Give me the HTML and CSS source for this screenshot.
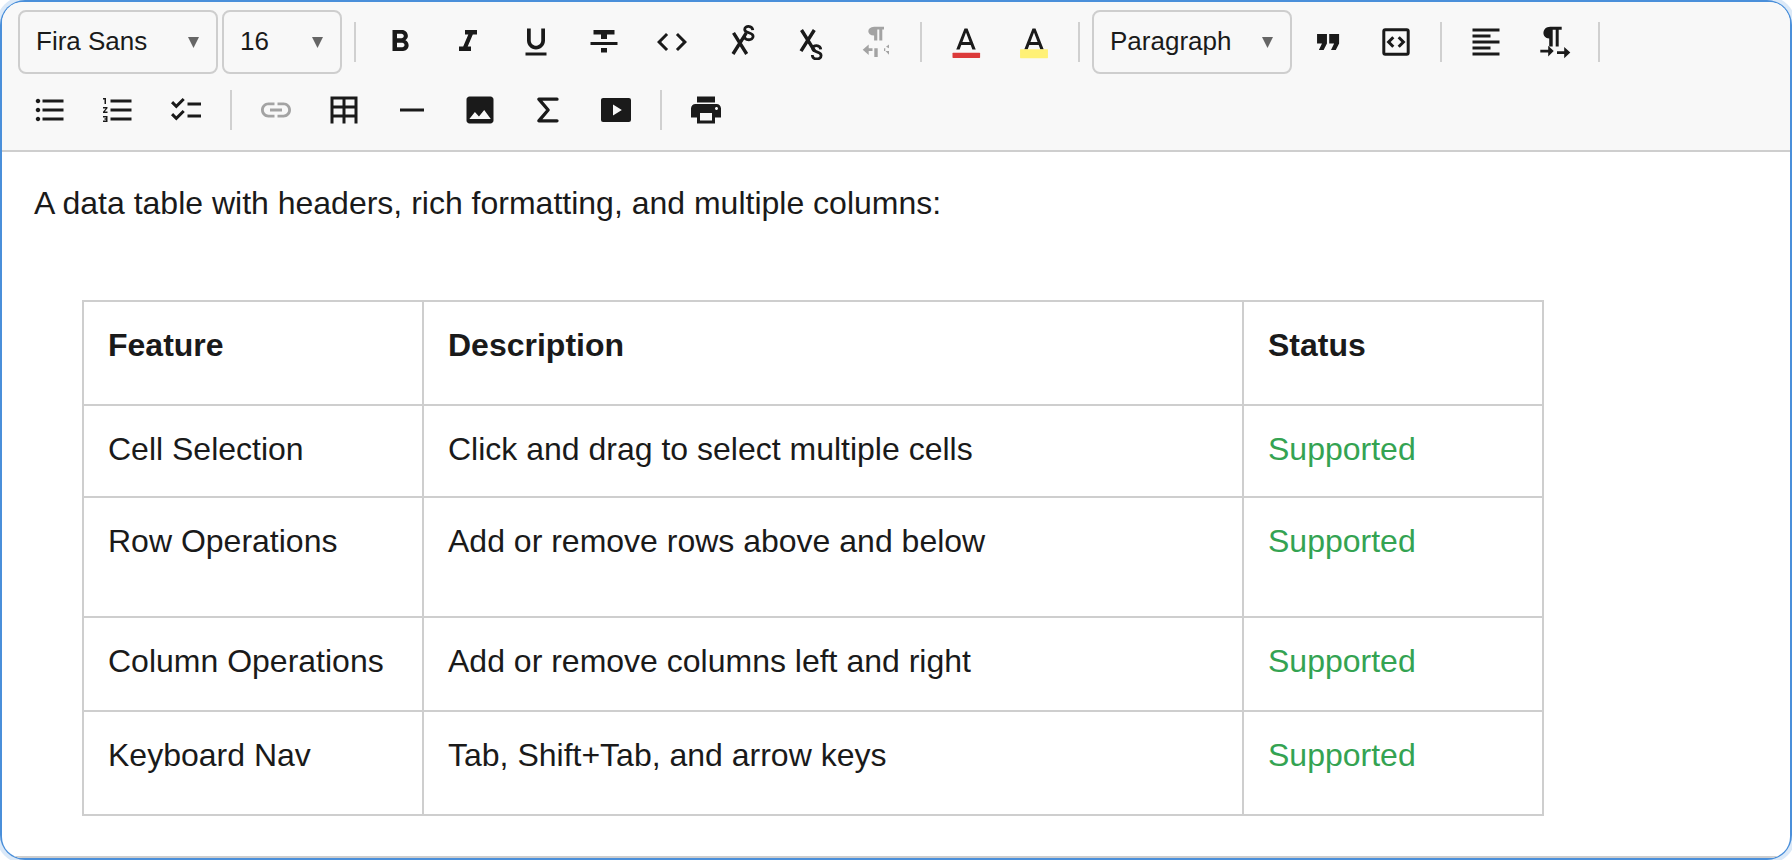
FILE: index.html
```
<!DOCTYPE html>
<html lang="en">

<head>
  <meta charset="UTF-8">
  <meta name="viewport" content="width=device-width, initial-scale=1.0">
  <title>Editor</title>
  <link rel="stylesheet" href="styles.css">
</head>

<body>
  <div class="editor">
    <div class="inner">
      <div class="toolbar">
        <div class="tools">
          <div class="select"><span>Fira Sans</span><svg class="arrow" viewBox="0 0 11 11"><path d="M0 0h11L5.5 11z"/></svg></div>
          <div class="select small"><span>16</span><svg class="arrow" viewBox="0 0 11 11"><path d="M0 0h11L5.5 11z"/></svg></div>
          <span class="sep"></span>
          <button class="btn" title="Bold"><svg viewBox="0 0 24 24"><path d="M15.6 10.79c.97-.67 1.65-1.77 1.65-2.79 0-2.26-1.75-4-4-4H7v14h7.04c2.09 0 3.71-1.7 3.71-3.79 0-1.52-.86-2.82-2.15-3.42zM10 6.5h3c.83 0 1.5.67 1.5 1.5s-.67 1.5-1.5 1.5h-3v-3zm3.5 9H10v-3h3.5c.83 0 1.5.67 1.5 1.5s-.67 1.5-1.5 1.5z"/></svg></button>
          <button class="btn" title="Italic"><svg viewBox="0 0 24 24"><path d="M10 4v3h2.21l-3.42 8H6v3h8v-3h-2.21l3.42-8H18V4z"/></svg></button>
          <button class="btn" title="Underline"><svg viewBox="0 0 24 24"><path d="M12 17c3.31 0 6-2.69 6-6V3h-2.5v8c0 1.93-1.57 3.5-3.5 3.5S8.5 12.93 8.5 11V3H6v8c0 3.31 2.69 6 6 6zm-7 2v2h14v-2H5z"/></svg></button>
          <button class="btn" title="Strikethrough"><svg viewBox="0 0 24 24"><path d="M10 19h4v-3h-4v3zM5 4v3h5v3h4V7h5V4H5zM3 14h18v-2H3v2z"/></svg></button>
          <button class="btn" title="Code"><svg viewBox="0 0 24 24"><path d="M9.4 16.6L4.8 12l4.6-4.6L8 6l-6 6 6 6 1.4-1.4zm5.2 0l4.6-4.6-4.6-4.6L16 6l6 6-6 6-1.4-1.4z"/></svg></button>
          <button class="btn" title="Superscript"><svg viewBox="0 0 36 36"><path class="line bold" d="M11.5 8.800l13.200 21.200M24.300 8.800L11 30"/><path class="line thin" d="M30.800 6.200C30.300 1.200 22.700 1.200 22.700 5.400c0 4.200 8.400 2.500 8.400 6.800 0 4.800-8.600 4.800-8.800-.4"/></svg></button>
          <button class="btn" title="Subscript"><svg viewBox="0 0 36 36"><path class="line bold" d="M11.500 6l13.200 21.200M24.300 6L11 27.200"/><path class="line thin" d="M30.800 25.400c-.5-5-8.100-5-8.100-.8 0 4.200 8.400 2.500 8.400 6.800 0 4.800-8.600 4.800-8.800-.4"/></svg></button>
          <button class="btn off" title="Right to left"><svg viewBox="0 0 36 36"><path d="M26 2.800v2.800h-1.700v11h-3v-11h-2v11h-3.200v-5c-7.700 0-7.700-8.800 0-8.800zM4.700 25.700l6-5.200v3.800h3.800v2.800h-3.800v3.800zM16.300 24.300h3.400V33h-3.400zM31 20.500v3.700l-3-1.400zM31 27v3.700L27.500 27zM26 24.300h1.300V27H26z"/></svg></button>
          <span class="sep"></span>
          <button class="btn" title="Text color"><svg viewBox="0 0 24 24"><path d="M11 3L5.500 17h2.250l1.120-3h6.250l1.120 3h2.250L13 3h-2zm-1.380 9L12 5.670 14.380 12H9.620z"/><rect class="red" x="3" y="19.200" width="18.400" height="3.400" rx=".4"/></svg></button>
          <button class="btn" title="Highlight"><svg viewBox="0 0 24 24"><path d="M11 3L5.500 17h2.250l1.120-3h6.250l1.120 3h2.250L13 3h-2zm-1.380 9L12 5.670 14.380 12H9.620z"/><rect class="yellow" x="2.700" y="16.800" width="18.600" height="6" rx=".4"/></svg></button>
          <span class="sep"></span>
          <div class="select"><span>Paragraph</span><svg class="arrow" viewBox="0 0 11 11"><path d="M0 0h11L5.500 11z"/></svg></div>
          <button class="btn" title="Quote"><svg viewBox="0 0 24 24"><path d="M5.900 17.300h3.200l2.200-4.300V6.700H4.700V13H8zM14 17.300h3.200l2.200-4.300V6.700h-6.600V13h3.300z"/></svg></button>
          <button class="btn" title="Code block"><svg viewBox="0 0 36 36"><rect class="line" x="5.800" y="5.800" width="24.400" height="24.400" rx="1.500"/><path class="line" d="M15.300 13.200L10.600 18l4.700 4.800M20.700 13.200l4.700 4.800-4.700 4.800"/></svg></button>
          <span class="sep"></span>
          <button class="btn" title="Align"><svg viewBox="0 0 24 24"><path d="M15 15H3v2h12v-2zm0-8H3v2h12V7zM3 13h18v-2H3v2zm0 8h18v-2H3v2zM3 3v2h18V3H3z"/></svg></button>
          <button class="btn" title="Left to right"><svg viewBox="0 0 36 36"><path d="M25.700 2.800v3h-3v16.700h-3V5.800h-3v16.700h-3.500v-7.900c-7.800-.3-7.800-11.800 1.100-11.800zM4.300 25.800h7.900v-4.100l5.500 5.400-5.500 5.500v-4.100H4.300zM21 27.200h7.200V23l6.100 5.600-6.100 5.700V30H21z"/></svg></button>
          <span class="sep"></span>
        </div>
        <div class="tools">
          <button class="btn" title="Bullet list"><svg viewBox="0 0 24 24"><path d="M4 10.500c-.83 0-1.500.67-1.500 1.500s.67 1.500 1.500 1.500 1.500-.67 1.500-1.500-.67-1.500-1.500-1.500zm0-6c-.83 0-1.500.67-1.500 1.500S3.170 7.500 4 7.500 5.500 6.830 5.500 6 4.830 4.500 4 4.500zm0 12c-.83 0-1.500.68-1.500 1.500s.68 1.500 1.500 1.500 1.500-.68 1.500-1.500-.67-1.500-1.500-1.500zM7 19h14v-2H7v2zm0-6h14v-2H7v2zm0-8v2h14V5H7z"/></svg></button>
          <button class="btn" title="Numbered list"><svg viewBox="0 0 24 24"><path d="M2 17h2v.5H3v1h1v.5H2v1h3v-4H2v1zm1-9h1V4H2v1h1v3zm-1 3h1.800L2 13.100v.9h3v-1H3.200L5 10.900V10H2v1zm5-6v2h14V5H7zm0 14h14v-2H7v2zm0-6h14v-2H7v2z"/></svg></button>
          <button class="btn" title="Check list"><svg viewBox="0 0 24 24"><path d="M22 7h-9v2h9V7zm0 8h-9v2h9v-2zM5.540 11L2 7.460l1.410-1.410 2.120 2.120 4.240-4.240 1.410 1.410L5.540 11zm0 8L2 15.460l1.410-1.410 2.120 2.120 4.240-4.240 1.410 1.410L5.540 19z"/></svg></button>
          <span class="sep"></span>
          <button class="btn off" title="Link"><svg viewBox="0 0 24 24"><path d="M3.900 12c0-1.710 1.390-3.100 3.100-3.100h4V7H7c-2.760 0-5 2.240-5 5s2.240 5 5 5h4v-1.900H7c-1.710 0-3.100-1.390-3.100-3.100zM8 13h8v-2H8v2zm9-6h-4v1.900h4c1.710 0 3.100 1.390 3.100 3.100s-1.390 3.100-3.100 3.100h-4V17h4c2.760 0 5-2.240 5-5s-2.240-5-5-5z"/></svg></button>
          <button class="btn" title="Table"><svg viewBox="0 0 24 24"><path d="M3 3h18v18h-2v-4h-6v4h-2v-4H5v4H3zM5 5v4h6V5zm8 0v4h6V5zM5 11v4h6v-4zm8 0v4h6v-4z"/></svg></button>
          <button class="btn" title="Line"><svg viewBox="0 0 24 24"><path d="M4 11h16v2H4z"/></svg></button>
          <button class="btn" title="Image"><svg viewBox="0 0 24 24"><path d="M21 19V5c0-1.100-.9-2-2-2H5c-1.100 0-2 .9-2 2v14c0 1.100.9 2 2 2h14c1.100 0 2-.9 2-2zM4.900 18l3.700-4.700 2.700 3 3.500-4.300 4.400 6z"/></svg></button>
          <button class="btn" title="Formula"><svg viewBox="0 0 24 24"><path class="line sum" d="M18 4.800H5.900L12.100 12l-6.200 7.200H18"/></svg></button>
          <button class="btn" title="Video"><svg viewBox="0 0 24 24"><path d="M3.400 4h17.200A1.400 1.400 0 0 1 22 5.400v13.200a1.400 1.400 0 0 1-1.400 1.400H3.400A1.400 1.400 0 0 1 2 18.600V5.400A1.400 1.400 0 0 1 3.400 4zM10 8.300v7.400l5.900-3.700z"/></svg></button>
          <span class="sep"></span>
          <button class="btn" title="Print"><svg viewBox="0 0 24 24"><path d="M19 8H5c-1.660 0-3 1.340-3 3v6h4v4h12v-4h4v-6c0-1.660-1.340-3-3-3zm-3 11H8v-5h8v5zm3-7c-.55 0-1-.45-1-1s.45-1 1-1 1 .45 1 1-.45 1-1 1zm-1-9H6v4h12V3z"/></svg></button>
        </div>
      </div>
      <div class="content">
        <p>A data table with headers, rich formatting, and multiple columns:</p>
        <table>
          <tr class="r1">
            <th class="c1">Feature</th>
            <th class="c2">Description</th>
            <th class="c3">Status</th>
          </tr>
          <tr class="r2">
            <td>Cell Selection</td>
            <td>Click and drag to select multiple cells</td>
            <td class="green">Supported</td>
          </tr>
          <tr class="r3">
            <td>Row Operations</td>
            <td>Add or remove rows above and below</td>
            <td class="green">Supported</td>
          </tr>
          <tr class="r4">
            <td>Column Operations</td>
            <td>Add or remove columns left and right</td>
            <td class="green">Supported</td>
          </tr>
          <tr class="r5">
            <td>Keyboard Nav</td>
            <td>Tab, Shift+Tab, and arrow keys</td>
            <td class="green">Supported</td>
          </tr>
        </table>
      </div>
    </div>
  </div>
</body>

</html>
```
FILE: styles.css
```
* {
  margin: 0;
  padding: 0;
  box-sizing: border-box;
}
body {
  font-family: "Liberation Sans", Arial, sans-serif;
  color: #1a1a1a;
  background-color: #fff;
  overflow: hidden;
}
.editor {
  height: 860px;
  padding: 2px;
  border-radius: 25px;
  background-color: #4a8fda;
  box-shadow: 0 0 0 4px #dbe9f8;
}
.inner {
  height: 100%;
  display: flex;
  flex-direction: column;
  border-radius: 21px;
  overflow: hidden;
  background-color: #fff;
}
.toolbar {
  display: flex;
  flex-direction: column;
  gap: 4px;
  height: 150px;
  padding: 8px 16px;
  background-color: #f8f8f8;
  border-bottom: 2px solid #cecece;
}
.tools {
  display: flex;
  align-items: center;
  gap: 4px;
  height: 64px;
}
.select {
  display: flex;
  align-items: center;
  justify-content: space-between;
  width: 200px;
  height: 64px;
  padding: 0 17px 2px 16px;
  border: 2px solid #cecece;
  border-radius: 8px;
  font-size: 26px;
}
.small {
  width: 120px;
}
.arrow {
  width: 11px;
  height: 11px;
  margin-top: 2px;
  fill: #666;
}
.sep {
  width: 2px;
  height: 40px;
  margin: 0 8px;
  background-color: #d0d0d0;
}
.btn {
  display: flex;
  align-items: center;
  justify-content: center;
  width: 64px;
  height: 64px;
  border: none;
  background: none;
  cursor: pointer;
}
.btn svg {
  width: 36px;
  height: 36px;
  fill: #1a1a1a;
}
.off svg {
  fill: #a3a3a3;
}
.btn .line {
  fill: none;
  stroke: #1a1a1a;
  stroke-width: 3;
}
.btn .bold {
  stroke-width: 3.4;
}
.btn .thin {
  stroke-width: 2.8;
}
.btn .sum {
  stroke-width: 2.2;
  stroke-linecap: round;
  stroke-linejoin: round;
}
.btn .red {
  fill: #dc3a3a;
}
.btn .yellow {
  fill: #fff176;
}
.content {
  flex: 1;
  padding: 24px 32px;
  border-bottom: 2px solid #cecece;
  font-size: 32px;
  line-height: 54px;
}
table {
  width: 1462px;
  margin: 70px 0 0 48px;
  border-collapse: collapse;
  table-layout: fixed;
}
th, td {
  padding: 16px 24px 0;
  border: 2px solid #cecece;
  text-align: left;
  vertical-align: top;
}
.c1 {
  width: 340px;
}
.c2 {
  width: 820px;
}
.c3 {
  width: 300px;
}
.r1 {
  height: 104px;
}
.r2 {
  height: 92px;
}
.r3 {
  height: 120px;
}
.r4 {
  height: 94px;
}
.r5 {
  height: 104px;
}
.green {
  color: #34a352;
}
```
